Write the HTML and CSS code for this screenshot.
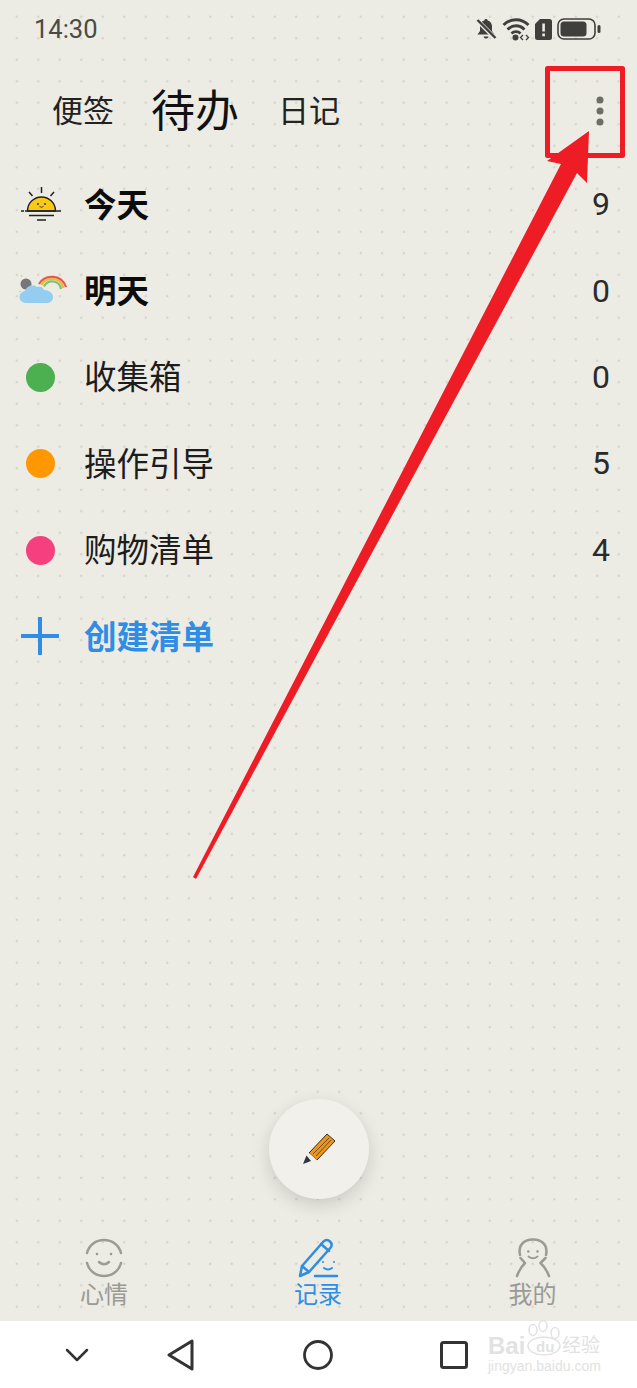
FILE: index.html
```html
<!DOCTYPE html>
<html lang="zh-CN">
<head>
  <meta charset="UTF-8" />
  <title>待办</title>
  <link rel="stylesheet" href="styles.css">
</head>
<body>
  <div class="page">
    <div class="status">
      <span class="time">14:30</span>
      <div class="status-icons">
        <svg width="22" height="24" viewBox="0 0 22 24"><path d="M11 2c-1 0-1.600.7-1.700 1.600C6.500 4.400 5 6.700 5 9.500V14l-2.500 3.500h17L17 14V9.500c0-2.800-1.500-5.100-4.300-5.900C12.600 2.700 12 2 11 2z" fill="#3f3f3c"/><path d="M8.500 19.500h5c-.4 1.400-1.300 2-2.500 2s-2.100-.6-2.500-2z" fill="#3f3f3c"/><path d="M2 3l18 18" stroke="#ecebe4" stroke-width="4.500"/><path d="M2.500 3l18 18" stroke="#3f3f3c" stroke-width="2.400"/></svg>
        <svg width="28" height="24" viewBox="0 0 28 24" fill="none" stroke="#3f3f3c" stroke-width="2.800"><path d="M1.500 8C8.500 1 19.500 1 26.500 8"/><path d="M5.500 12.500c5-5 12-5 17 0"/><path d="M9.500 16.500c2.500-2.500 6.500-2.500 9 0"/><circle cx="13.500" cy="20.500" r="3" fill="#3f3f3c" stroke="none"/><path d="M21 18l-2.500 2.500L21 23M24 18l2.500 2.500L24 23" stroke-width="1.300"/></svg>
        <svg width="17" height="22" viewBox="0 0 17 22"><path d="M5 1h9.500A2.500 2.500 0 0 1 17 3.500v16a2.500 2.500 0 0 1-2.500 2.500h-12A2.500 2.500 0 0 1 0 19.500V6z" fill="#3f3f3c"/><rect x="7.300" y="5.500" width="2.600" height="8" fill="#ecebe4"/><rect x="7.300" y="15.500" width="2.600" height="2.800" fill="#ecebe4"/></svg>
        <svg width="44" height="22" viewBox="0 0 44 22"><rect x="1" y="1" width="37" height="20" rx="6" fill="none" stroke="#3f3f3c" stroke-width="1.600"/><rect x="3.500" y="3.500" width="26" height="15" rx="3.500" fill="#3f3f3c"/><rect x="40.500" y="7" width="3" height="8" rx="1.500" fill="#3f3f3c"/></svg>
      </div>
    </div>

    <div class="tabs">
      <span class="tab">便签</span>
      <span class="tab tab-active">待办</span>
      <span class="tab">日记</span>
      <svg class="more" width="8" height="30" viewBox="0 0 8 30"><circle cx="4" cy="4" r="3.500"/><circle cx="4" cy="15" r="3.500"/><circle cx="4" cy="26" r="3.500"/></svg>
    </div>

    <ul class="list">
      <li class="row">
        <span class="row-icon">
          <svg width="42" height="36" viewBox="0 0 42 36"><path d="M6.500 24a14 14 0 0 1 28 0z" fill="#f9c915" stroke="#222" stroke-width="1.400"/><path d="M20.500 0v6M8 5l3.500 4M33 5l-3.500 4" stroke="#222" stroke-width="1.500"/><path d="M0 24h3M4 24h36M8 28.500h25M16 33h9" stroke="#222" stroke-width="1.500"/><circle cx="17" cy="17" r="1" fill="#333"/><circle cx="24" cy="17" r="1" fill="#333"/><path d="M18.500 19.500q2 1.500 4 0" stroke="#333" stroke-width=".9" fill="none"/></svg>
        </span>
        <span class="row-name row-name-bold">今天</span>
        <span class="row-count">9</span>
      </li>
      <li class="row">
        <span class="row-icon">
          <svg width="48" height="34" viewBox="0 0 48 34" class="weather"><circle cx="7" cy="12" r="5.500" fill="#77777a"/><path d="M3 5L2 3M0 12h-1M2 19l-2 1" stroke="#e0c56a" stroke-width="1"/><path d="M20 12a15 15 0 0 1 27 3" fill="none" stroke="#e8574e" stroke-width="2.200"/><path d="M22.500 13a12 12 0 0 1 22 3" fill="none" stroke="#f0b93a" stroke-width="2.200"/><path d="M25 14.500a9 9 0 0 1 17 2.500" fill="none" stroke="#7cc576" stroke-width="2.200"/><path d="M7 31a6 6 0 0 1-1-12c1.500-5 8-7 12-4 3-1 6 0 7 3 5 0 9 3 9 7 0 4-3 6-6 6z" fill="#94cdf0"/></svg>
        </span>
        <span class="row-name row-name-bold">明天</span>
        <span class="row-count">0</span>
      </li>
      <li class="row">
        <span class="row-icon"><span class="dot dot-green"></span></span>
        <span class="row-name">收集箱</span>
        <span class="row-count">0</span>
      </li>
      <li class="row">
        <span class="row-icon"><span class="dot dot-orange"></span></span>
        <span class="row-name">操作引导</span>
        <span class="row-count">5</span>
      </li>
      <li class="row">
        <span class="row-icon"><span class="dot dot-pink"></span></span>
        <span class="row-name">购物清单</span>
        <span class="row-count">4</span>
      </li>
      <li class="row row-add">
        <span class="row-icon">
          <svg width="38" height="38" viewBox="0 0 38 38"><path d="M19 0v38M0 19h38" stroke="#2f8de4" stroke-width="4"/></svg>
        </span>
        <span class="row-name">创建清单</span>
      </li>
    </ul>

    <div class="fab-wrap">
      <button class="fab">
        <svg width="36" height="36" viewBox="0 0 36 36"><path d="M8 22L26 3l8 7-18 19z" fill="#e8961e" stroke="#3a2c1a" stroke-width="1"/><path d="M12 23L28 7M15 25L30 9" stroke="#7a4a10" stroke-width="1"/><path d="M8 22l8 7-4 .8-4-3.800z" fill="#f4efe4"/><path d="M2 33l3.500-8.500 4.500 5.500z" fill="#2e3442"/></svg>
      </button>
    </div>

    <nav class="tabbar">
      <div class="tabbar-item">
        <svg width="40" height="40" viewBox="0 0 40 40" fill="none" stroke="#9a9a96" stroke-width="2.500" stroke-linecap="round"><path d="M3 15C5 7 12 2 20 2s15 5 17 13"/><path d="M37 25c-2 8-9 13-17 13S5 33 3 25"/><path d="M15 24q5 4.500 10 0"/><circle cx="13" cy="16" r="1.300" fill="#9a9a96" stroke="none"/><circle cx="27" cy="16" r="1.300" fill="#9a9a96" stroke="none"/></svg>
        <span>心情</span>
      </div>
      <div class="tabbar-item tabbar-item-on">
        <svg width="42" height="40" viewBox="0 0 42 40" fill="none" stroke="#2f8de4" stroke-width="2.500" stroke-linecap="round" stroke-linejoin="round"><path d="M3 38l2-10L26 4c2-2.500 5-2.500 7-.5s2 4.500.3 6.500L12 34z"/><path d="M5 28l7 6M24 6l8 7"/><path d="M18 38h22"/><path d="M27 30q4 3 8 0" stroke-width="2"/><circle cx="26" cy="24" r="1" fill="#2f8de4" stroke="none"/><circle cx="37" cy="24" r="1" fill="#2f8de4" stroke="none"/></svg>
        <span>记录</span>
      </div>
      <div class="tabbar-item">
        <svg width="36" height="40" viewBox="0 0 36 40" fill="none" stroke="#9a9a96" stroke-width="2.500" stroke-linecap="round" stroke-linejoin="round"><path d="M5 17C3 8 8 1.500 18 1.500S33 8 31 17"/><path d="M5.500 20l4.500 5Q5 30 2 38"/><path d="M30.500 20L25.500 25Q31 30 34 38"/><path d="M13.500 18.500q4.500 3.500 9 0" stroke-width="2"/><circle cx="13.300" cy="13.500" r="1.300" fill="#9a9a96" stroke="none"/><circle cx="22.500" cy="13.500" r="1.300" fill="#9a9a96" stroke="none"/></svg>
        <span>我的</span>
      </div>
    </nav>

    <div class="navbar">
      <svg class="nav-chevron" width="24" height="14" viewBox="0 0 24 14"><path d="M2 2l10 10L22 2" fill="none" stroke="#333" stroke-width="2.500" stroke-linecap="round" stroke-linejoin="round"/></svg>
      <svg class="nav-back" width="28" height="32" viewBox="0 0 28 32"><path d="M25 2v28L2 16z" fill="none" stroke="#333" stroke-width="3" stroke-linejoin="round"/></svg>
      <svg class="nav-home" width="30" height="30" viewBox="0 0 30 30"><circle cx="15" cy="15" r="13.500" fill="none" stroke="#333" stroke-width="2.800"/></svg>
      <svg class="nav-recent" width="28" height="28" viewBox="0 0 28 28"><rect x="1.500" y="1.500" width="25" height="25" rx="2" fill="none" stroke="#333" stroke-width="3"/></svg>
    </div>

    <div class="watermark">
      <svg class="paw" width="44" height="40" viewBox="0 0 44 40" fill="none" stroke="#e2e2e2" stroke-width="1.500"><ellipse cx="10" cy="12" rx="4" ry="5.500"/><ellipse cx="20" cy="8" rx="4" ry="5.500"/><ellipse cx="32" cy="15" rx="4" ry="5.500"/><ellipse cx="21" cy="28" rx="16" ry="9"/></svg>
      <span class="wm-bai">Bai</span>
      <span class="wm-du">du</span>
      <span class="wm-jy">经验</span>
      <span class="wm-url">jingyan.baidu.com</span>
    </div>

    <svg class="markup" width="637" height="1388" viewBox="0 0 637 1388">
      <rect x="547.500" y="68.500" width="75" height="87" fill="none" stroke="#ee1c25" stroke-width="5" stroke-linejoin="round"/>
      <polygon points="589,131 547,161 561,164 193,877 196,879 577,173 587,183" fill="#ee1c25"/>
    </svg>
  </div>
</body>
</html>
```

FILE: styles.css
```css
* { box-sizing: border-box; }
body {
  margin: 0;
  font-family: "Noto Sans CJK SC", "Noto Sans", sans-serif;
  color: #111;
}
.page {
  position: relative;
  width: 637px;
  height: 1388px;
  overflow: hidden;
  display: flex;
  flex-direction: column;
  background-color: #ecebe4;
  background-image: radial-gradient(circle, #d4d3cb 1.1px, transparent 1.6px);
  background-size: 21.5px 21.5px;
  background-position: 6px 6px;
}

.status {
  height: 58px;
  flex: none;
  display: flex;
  align-items: center;
  justify-content: space-between;
  padding: 0 36px 0 34px;
}
.time {
  font-family: Roboto, sans-serif;
  font-size: 25.5px;
  color: #4a4a46;
}
.status-icons {
  display: flex;
  align-items: center;
  gap: 5px;
}

.tabs {
  height: 104px;
  flex: none;
  display: flex;
  align-items: center;
  padding: 0 33px 0 52px;
}
.tab {
  font-size: 31px;
  line-height: 44px;
  margin-bottom: 3px;
  color: #222;
}
.tab-active {
  font-size: 44px;
  line-height: 60px;
  margin: 0 39px 4px 37px;
  color: #111;
}
.more {
  margin-left: auto;
  margin-top: 1px;
  fill: #6d6d68;
}

.list {
  list-style: none;
  margin: 0;
  padding: 0;
}
.row {
  height: 86.4px;
  display: flex;
  align-items: center;
  padding: 0 27px 0 21px;
}
.row-icon {
  width: 63px;
  flex: none;
  display: flex;
  align-items: center;
}
.weather { margin-left: -2px; margin-bottom: 5px; }
.row-name {
  font-size: 32.5px;
  margin-bottom: 6px;
  color: #1c1c1c;
}
.row-name-bold {
  font-weight: 700;
  color: #0c0c0c;
}
.row-count {
  margin-left: auto;
  margin-bottom: 2px;
  font-family: Roboto, sans-serif;
  font-size: 32px;
  color: #2a2a2a;
}
.dot {
  width: 29px;
  height: 29px;
  margin-left: 5px;
  margin-bottom: 1px;
  border-radius: 50%;
}
.dot-green { background: #4caf50; }
.dot-orange { background: #ff9800; }
.dot-pink { background: #f5407f; }
.row-add .row-name {
  font-weight: 700;
  color: #2f8de4;
}
.row-add svg { margin-bottom: 3px; }

.fab-wrap {
  margin-top: auto;
  display: flex;
  justify-content: center;
  padding-bottom: 23px;
}
.fab {
  width: 100px;
  height: 100px;
  border: none;
  padding: 0;
  border-radius: 50%;
  background: #f1f0ea;
  box-shadow: 0 6px 18px rgba(0, 0, 0, 0.14);
  display: flex;
  align-items: center;
  justify-content: center;
}

.tabbar {
  height: 99px;
  flex: none;
  display: flex;
}
.tabbar-item {
  width: 208px;
  display: flex;
  flex-direction: column;
  align-items: center;
  font-size: 24px;
  line-height: 30px;
  color: #9a9a96;
  padding-top: 16px;
}
.tabbar-item:nth-child(2) { width: 220px; }
.tabbar-item:nth-child(3) { width: 209px; }
.tabbar-item-on { color: #2f8de4; }

.navbar {
  position: relative;
  height: 67px;
  flex: none;
  background: #fff;
  display: flex;
  align-items: center;
  padding-left: 65px;
}
.nav-back { margin-left: 78px; }
.nav-home { margin-left: 108px; }
.nav-recent { margin-left: 107px; }

.watermark {
  position: absolute;
  left: 486px;
  top: 1318px;
  width: 120px;
  height: 66px;
  color: #e2e2e2;
}
.paw {
  position: absolute;
  left: 37px;
  top: 0;
}
.wm-bai {
  position: absolute;
  left: 2px;
  top: 14px;
  font-family: "Liberation Sans", sans-serif;
  font-size: 24px;
  font-weight: 700;
}
.wm-du {
  position: absolute;
  left: 50px;
  top: 20px;
  font-family: "Liberation Sans", sans-serif;
  font-size: 15px;
  font-weight: 700;
}
.wm-jy {
  position: absolute;
  left: 76px;
  top: 12px;
  font-size: 19px;
}
.wm-url {
  position: absolute;
  left: 2px;
  top: 40px;
  font-family: "Liberation Sans", sans-serif;
  font-size: 14px;
  white-space: nowrap;
}

.markup {
  position: absolute;
  left: 0;
  top: 0;
  pointer-events: none;
}
```
